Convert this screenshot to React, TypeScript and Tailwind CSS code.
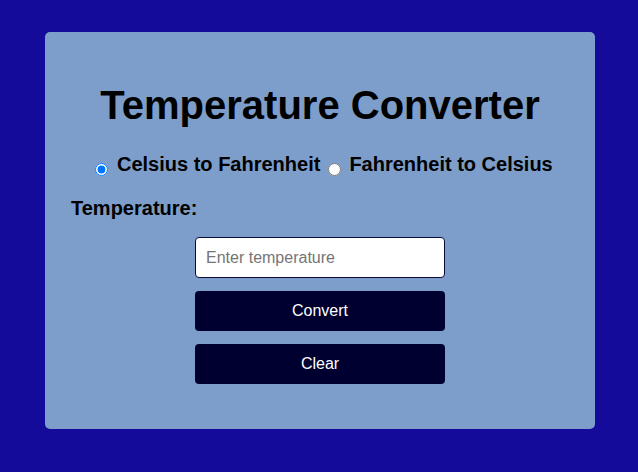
import { useState } from "react";

export default function App() {
  const [mode, setMode] = useState<"c2f" | "f2c">("c2f");
  const [value, setValue] = useState("");

  return (
    <div
      className="w-[638px] h-[472px] bg-[#140b9b] pt-[32px] pl-[45px]"
      style={{ fontFamily: '"Liberation Sans", Arial, sans-serif' }}
    >
      <div className="w-[550px] h-[397px] rounded-[5px] bg-[#7d9ecb] pt-[50px] flex flex-col text-black">
        <h1 className="text-center text-[40px] leading-[46px] font-bold">
          Temperature Converter
        </h1>

        <div className="flex items-start pl-[50px] mt-[25px] text-[20px] leading-[23px] font-bold">
          <input
            type="radio"
            name="mode"
            checked={mode === "c2f"}
            onChange={() => setMode("c2f")}
            className="m-0 mt-[10px] w-[13px] h-[13px]"
          />
          <span className="ml-[9px]">Celsius to Fahrenheit</span>
          <input
            type="radio"
            name="mode"
            checked={mode === "f2c"}
            onChange={() => setMode("f2c")}
            className="m-0 mt-[10px] ml-[8px] w-[13px] h-[13px]"
          />
          <span className="ml-[8px]">Fahrenheit to Celsius</span>
        </div>

        <label className="ml-[26px] mt-[21px] text-[20px] leading-[23px] font-bold">
          Temperature:
        </label>

        <div className="flex flex-col items-center mt-[17px] gap-[13px]">
          <input
            type="text"
            value={value}
            onChange={(e) => setValue(e.target.value)}
            placeholder="Enter temperature"
            className="w-[250px] h-[41px] bg-white border border-[#0a0a3a] rounded-[4px] px-[10px] text-[16px] placeholder:text-[#757575] outline-none"
          />
          <button className="w-[250px] h-[40px] bg-[#000030] text-white text-[16px] rounded-[4px]">
            Convert
          </button>
          <button
            className="w-[250px] h-[40px] bg-[#000030] text-white text-[16px] rounded-[4px]"
            onClick={() => setValue("")}
          >
            Clear
          </button>
        </div>
      </div>
    </div>
  );
}
